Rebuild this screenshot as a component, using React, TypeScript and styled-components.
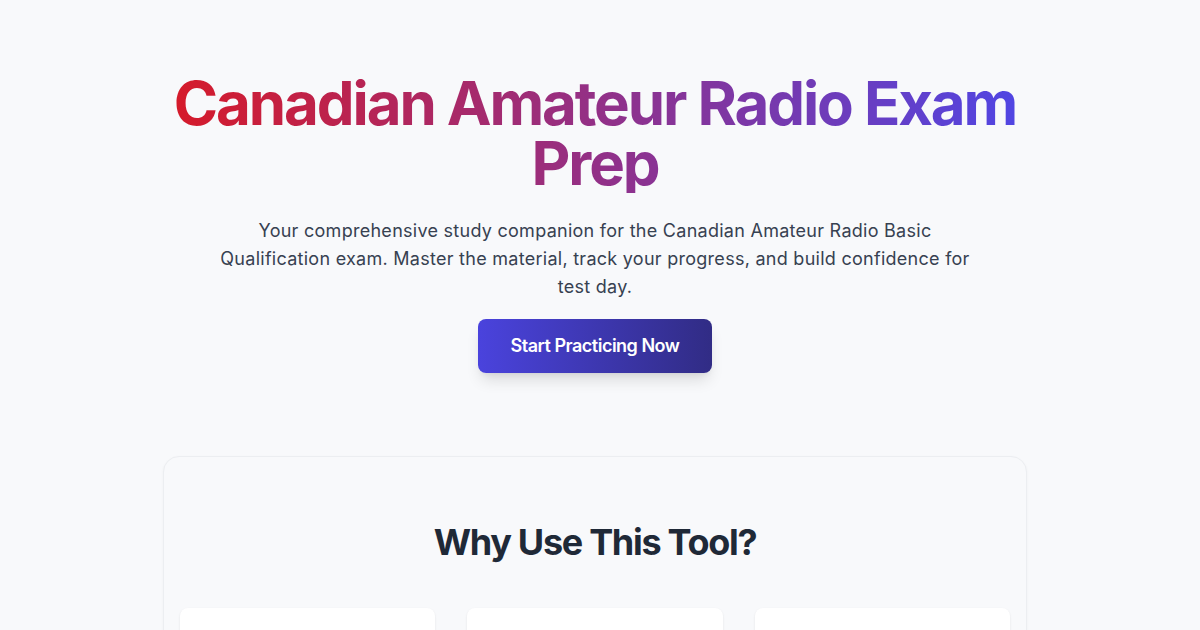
import React from "react";
import styled, { createGlobalStyle } from "styled-components";

const GlobalStyle = createGlobalStyle`
  * { box-sizing: border-box; }
  html, body { margin: 0; padding: 0; }
  body {
    background: #f8f9fb;
    font-family: Inter, "Noto Sans", "Liberation Sans", sans-serif;
    -webkit-font-smoothing: antialiased;
  }
`;

const Page = styled.main`
  min-height: 100vh;
  background: #f8f9fb;
  padding: 73px 10px 0 0;
`;

const Container = styled.div`
  max-width: 896px;
  margin: 0 auto;
  padding: 0 16px;
`;

const Hero = styled.section`
  display: flex;
  flex-direction: column;
  align-items: center;
  text-align: center;
`;

const Title = styled.h1`
  margin: 0 0 24px;
  font-size: 60px;
  line-height: 60px;
  font-weight: 700;
  letter-spacing: -2.1px;
  background: linear-gradient(to right, #d71a28, #4f46e5);
  -webkit-background-clip: text;
  background-clip: text;
  color: transparent;
  align-self: stretch;
`;

const Lead = styled.p`
  margin: 0 0 18px;
  max-width: 768px;
  font-size: 18px;
  line-height: 28px;
  letter-spacing: 0.27px;
  color: #374151;
`;

const CtaButton = styled.button`
  border: none;
  cursor: pointer;
  font-family: inherit;
  font-size: 18px;
  line-height: 28px;
  font-weight: 600;
  letter-spacing: -0.5px;
  color: #ffffff;
  padding: 13px 33px;
  border-radius: 8px;
  background: linear-gradient(to right, #4a43dd, #312c85);
  box-shadow: 0 10px 15px -3px rgba(0, 0, 0, 0.12), 0 4px 6px -4px rgba(0, 0, 0, 0.1);
`;

const Features = styled.section`
  margin-top: 83px;
  background: #f8f9fb;
  border: 1px solid #eceef1;
  border-radius: 16px;
  box-shadow: 0 1px 3px rgba(0, 0, 0, 0.04);
  padding: 65px 16px 16px;
`;

const SectionTitle = styled.h2`
  margin: 0 0 46px;
  text-align: center;
  font-size: 36px;
  line-height: 40px;
  font-weight: 700;
  letter-spacing: -1.3px;
  color: #1f2937;
`;

const CardGrid = styled.div`
  display: grid;
  grid-template-columns: repeat(3, 1fr);
  gap: 32px;
`;

const Card = styled.div`
  background: #ffffff;
  border-radius: 8px;
  height: 220px;
  box-shadow: 0 1px 3px rgba(0, 0, 0, 0.06), 0 1px 2px rgba(0, 0, 0, 0.04);
`;

export default function App() {
  return (
    <>
      <GlobalStyle />
      <Page>
        <Container>
          <Hero>
            <Title>Canadian Amateur Radio Exam Prep</Title>
            <Lead>
              Your comprehensive study companion for the Canadian Amateur Radio Basic
              Qualification exam. Master the material, track your progress, and build
              confidence for test day.
            </Lead>
            <CtaButton>Start Practicing Now</CtaButton>
          </Hero>
          <Features>
            <SectionTitle>Why Use This Tool?</SectionTitle>
            <CardGrid>
              <Card />
              <Card />
              <Card />
            </CardGrid>
          </Features>
        </Container>
      </Page>
    </>
  );
}
